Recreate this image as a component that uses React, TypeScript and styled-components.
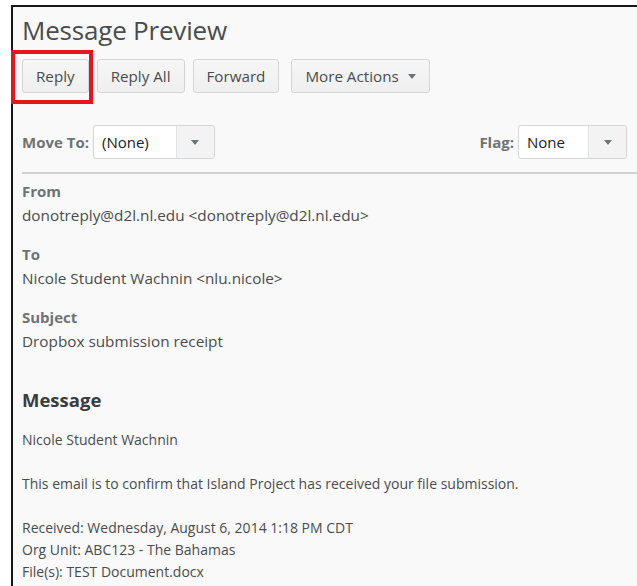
import React from "react";
import styled, { createGlobalStyle } from "styled-components";

const GlobalStyle = createGlobalStyle`
  html, body {
    margin: 0;
    padding: 0;
    background: #ffffff;
  }
  body {
    font-family: "Open Sans", Lato, sans-serif;
  }
`;

const Page = styled.div`
  position: relative;
  width: 637px;
  height: 586px;
  overflow: hidden;
  padding: 5px 0 0 11px;
  box-sizing: border-box;
`;

const Frame = styled.section`
  background: #f9f9f9;
  border-top: 2px solid #161616;
  border-left: 2px solid #161616;
  height: 100%;
  padding: 7px 0 0 9px;
  box-sizing: border-box;
`;

const Title = styled.h1`
  margin: 0;
  font-size: 26px;
  font-weight: 400;
  color: #494c4e;
  line-height: 32px;
  letter-spacing: -0.2px;
`;

const Toolbar = styled.div`
  display: flex;
  gap: 8px;
  margin-top: 13px;
`;

const Button = styled.button<{ $spaced?: boolean }>`
  display: flex;
  align-items: center;
  gap: 9px;
  height: 34px;
  padding: ${(p) => (p.$spaced ? "0 13px 0 13px" : "0 13px")};
  margin-left: ${(p) => (p.$spaced ? 4 : 0)}px;
  font-family: inherit;
  font-size: 15.2px;
  color: #494c4e;
  background: linear-gradient(#f6f6f6, #efefef);
  border: 1px solid #d3d6d8;
  border-radius: 3px;
`;

const Caret = styled.span`
  width: 0;
  height: 0;
  border-left: 4px solid transparent;
  border-right: 4px solid transparent;
  border-top: 5px solid #6e7376;
`;

// the red outline drawn on top of the first button
const Highlight = styled.div`
  position: absolute;
  left: 11px;
  top: 50px;
  width: 82px;
  height: 54px;
  border: 4px solid #e8141c;
  box-sizing: border-box;
  pointer-events: none;
`;

const FilterRow = styled.div`
  display: flex;
  align-items: center;
  justify-content: space-between;
  margin-top: 32px;
  padding-right: 10px;
  padding-bottom: 13px;
  border-bottom: 2px solid #d0d2d3;
`;

const Field = styled.div`
  display: flex;
  align-items: center;
  gap: 4px;
`;

const FieldLabel = styled.span`
  font-size: 15px;
  font-weight: 700;
  color: #6e7376;
`;

const Select = styled.div<{ $width: number }>`
  display: flex;
  width: ${(p) => p.$width}px;
  height: 34px;
  border: 1px solid #d3d6d8;
  border-radius: 3px;
  background: #ffffff;
  box-sizing: border-box;
  overflow: hidden;
`;

const SelectValue = styled.span`
  flex: 1;
  display: flex;
  align-items: center;
  padding-left: 8px;
  font-size: 15px;
  color: #202122;
`;

const SelectArrow = styled.span`
  width: 37px;
  display: flex;
  align-items: center;
  justify-content: center;
  background: #f3f3f3;
  border-left: 1px solid #e0e2e3;
`;

const Details = styled.div`
  display: flex;
  flex-direction: column;
  gap: 19px;
  margin-top: 7px;
`;

const Entry = styled.div`
  display: flex;
  flex-direction: column;
  gap: 4px;
`;

const EntryLabel = styled.span`
  font-size: 15px;
  font-weight: 700;
  color: #6e7376;
  line-height: 20px;
`;

const EntryValue = styled.span`
  font-size: 15.3px;
  color: #494c4e;
  line-height: 20px;
`;

const Heading = styled.h2`
  margin: 35px 0 0;
  font-size: 18.5px;
  font-weight: 700;
  color: #3a3c3e;
  line-height: 28px;
`;

const Body = styled.div`
  margin-top: 15px;
  font-size: 14px;
  color: #494c4e;
  line-height: 22px;
`;

const Para = styled.p`
  margin: 0 0 22px;
`;

const SelectBox = ({ value, width }: { value: string; width: number }) => (
  <Select $width={width}>
    <SelectValue>{value}</SelectValue>
    <SelectArrow>
      <Caret />
    </SelectArrow>
  </Select>
);

const App: React.FunctionComponent = () => {
  return (
    <Page>
      <GlobalStyle />
      <Frame>
        <Title>Message Preview</Title>
        <Toolbar>
          <Button>Reply</Button>
          <Button>Reply All</Button>
          <Button>Forward</Button>
          <Button $spaced>
            More Actions <Caret />
          </Button>
        </Toolbar>
        <FilterRow>
          <Field>
            <FieldLabel>Move To:</FieldLabel>
            <SelectBox value="(None)" width={122} />
          </Field>
          <Field>
            <FieldLabel>Flag:</FieldLabel>
            <SelectBox value="None" width={109} />
          </Field>
        </FilterRow>
        <Details>
          <Entry>
            <EntryLabel>From</EntryLabel>
            <EntryValue>
              donotreply@d2l.nl.edu &lt;donotreply@d2l.nl.edu&gt;
            </EntryValue>
          </Entry>
          <Entry>
            <EntryLabel>To</EntryLabel>
            <EntryValue>Nicole Student Wachnin &lt;nlu.nicole&gt;</EntryValue>
          </Entry>
          <Entry>
            <EntryLabel>Subject</EntryLabel>
            <EntryValue>Dropbox submission receipt</EntryValue>
          </Entry>
        </Details>
        <Heading>Message</Heading>
        <Body>
          <Para>Nicole Student Wachnin</Para>
          <Para>
            This email is to confirm that Island Project has received your file
            submission.
          </Para>
          <div>Received: Wednesday, August 6, 2014 1:18 PM CDT</div>
          <div>Org Unit: ABC123 - The Bahamas</div>
          <div>File(s): TEST Document.docx</div>
        </Body>
      </Frame>
      <Highlight />
    </Page>
  );
};

export default App;
